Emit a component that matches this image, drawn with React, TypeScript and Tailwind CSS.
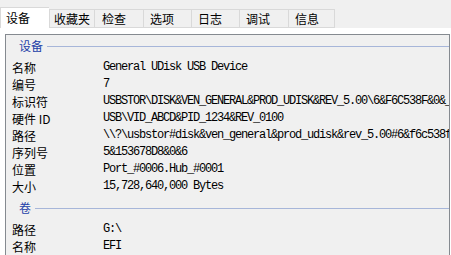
import React from "react";

const cjk = { fontFamily: '"Noto Sans CJK SC", "Liberation Sans", sans-serif' };
const mono = { fontFamily: '"Liberation Mono", "Noto Sans CJK SC", monospace' };

const tabs: { label: string; w: string; pl: string }[] = [
  { label: "收藏夹", w: "w-[46px]", pl: "pl-[4px]" },
  { label: "检查", w: "w-[49px]", pl: "pl-[7px]" },
  { label: "选项", w: "w-[48px]", pl: "pl-[6px]" },
  { label: "日志", w: "w-[48px]", pl: "pl-[6px]" },
  { label: "调试", w: "w-[49px]", pl: "pl-[6px]" },
  { label: "信息", w: "w-[46px]", pl: "pl-[6px]" },
];

function Header({ text }: { text: string }) {
  return (
    <div className="flex items-center h-[22px] pl-[13px]">
      <span className="text-[12px] leading-[14px] text-[#2340a8]" style={cjk}>
        {text}
      </span>
      <div className="flex-1 h-px bg-[#a7b6d9] ml-[4px]" />
    </div>
  );
}

function Row({ label, value }: { label: string; value: string }) {
  return (
    <div className="flex items-center h-[17px] pl-[6px] whitespace-nowrap">
      <span className="w-[91px] shrink-0 text-[12px] leading-[17px] text-black" style={cjk}>
        {label}
      </span>
      <span
        className="text-[12px] leading-[17px] tracking-[-1.2px] text-black"
        style={mono}
      >
        {value}
      </span>
    </div>
  );
}

export default function App() {
  const device: [string, string][] = [
    ["名称", "General UDisk USB Device"],
    ["编号", "7"],
    ["标识符", "USBSTOR\\DISK&VEN_GENERAL&PROD_UDISK&REV_5.00\\6&F6C538F&0&_"],
    ["硬件 ID", "USB\\VID_ABCD&PID_1234&REV_0100"],
    ["路径", "\\\\?\\usbstor#disk&ven_general&prod_udisk&rev_5.00#6&f6c538f&0&_"],
    ["序列号", "5&153678D8&0&6"],
    ["位置", "Port_#0006.Hub_#0001"],
    ["大小", "15,728,640,000 Bytes"],
  ];
  const volume: [string, string][] = [
    ["路径", "G:\\"],
    ["名称", "EFI"],
  ];
  return (
    <div className="w-[451px] h-[255px] bg-[#f0f0f0] overflow-hidden flex flex-col">
      <div className="flex items-end h-[28px] shrink-0">
        <div
          className="w-[49px] h-[21px] bg-white border-t border-l border-[#d9d9d9] pl-[5px] flex items-center text-[12px] text-black"
          style={cjk}
        >
          设备
        </div>
        {tabs.map((t, i) => (
          <div
            key={t.label}
            className={`${t.w} ${t.pl} h-[19px] bg-[#f0f0f0] border-t border-r border-b border-[#d9d9d9] ${
              i === 0 ? "border-l" : ""
            } flex items-center text-[12px] text-black`}
            style={cjk}
          >
            {t.label}
          </div>
        ))}
      </div>
      <div className="flex-1 bg-white pl-[5px] pr-[1px] pt-[6px]">
        <div className="h-full bg-[#f0f0f0] border-t border-l border-r border-[#858a90] overflow-hidden">
          <Header text="设备" />
          <div className="mt-[2px]">
            {device.map(([l, v]) => (
              <Row key={l} label={l} value={v} />
            ))}
          </div>
          <div className="mt-[2px]">
            <Header text="卷" />
          </div>
          <div className="mt-[2px]">
            {volume.map(([l, v]) => (
              <Row key={l} label={l} value={v} />
            ))}
          </div>
        </div>
      </div>
    </div>
  );
}
